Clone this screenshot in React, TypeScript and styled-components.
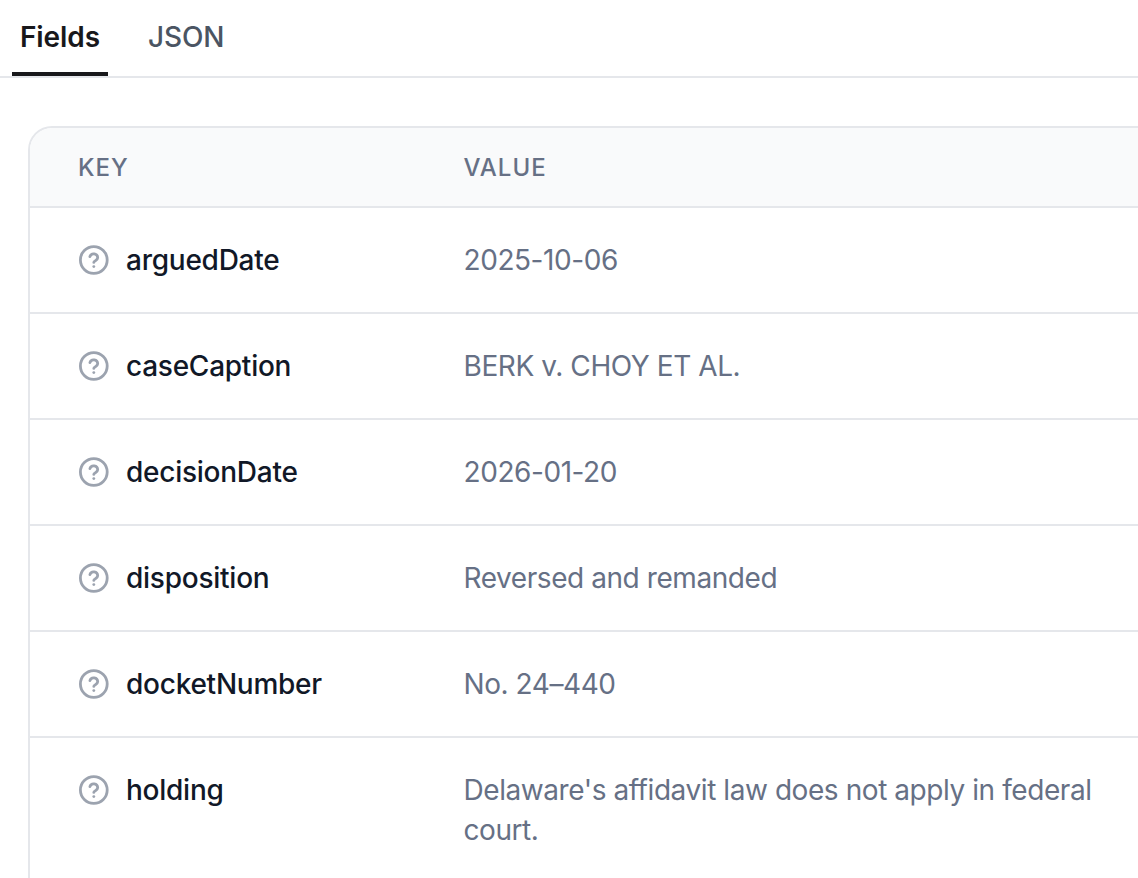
import React from "react";
import styled, { createGlobalStyle } from "styled-components";

const fields = [
  { key: "arguedDate", value: "2025-10-06" },
  { key: "caseCaption", value: "BERK v. CHOY ET AL." },
  { key: "decisionDate", value: "2026-01-20" },
  { key: "disposition", value: "Reversed and remanded" },
  { key: "docketNumber", value: "No. 24–440" },
  { key: "holding", value: "Delaware's affidavit law does not apply in federal court." },
];

const HelpIcon: React.FC = () => (
  <IconSvg viewBox="0 0 32 32" fill="none" stroke="#9ca3af" strokeWidth="2.8" strokeLinecap="round" strokeLinejoin="round">
    <circle cx="15.8" cy="16" r="13.4" />
    <path d="M11.9 12.6a4 4 0 0 1 7.8 1.2c0 2.6-3.9 3.3-3.9 4.6" />
    <path d="M15.8 22.6h.02" />
  </IconSvg>
);

export default function App() {
  return (
    <Page>
      <GlobalStyle />
      <Tabs>
        <Tab $active>Fields</Tab>
        <Tab>JSON</Tab>
      </Tabs>
      <Card>
        <HeaderRow>
          <HeaderCell>Key</HeaderCell>
          <HeaderCell>Value</HeaderCell>
        </HeaderRow>
        {fields.map((f) => (
          <Row key={f.key}>
            <KeyCell>
              <HelpIcon />
              <KeyName>{f.key}</KeyName>
            </KeyCell>
            <ValueCell>{f.value}</ValueCell>
          </Row>
        ))}
      </Card>
    </Page>
  );
}

const GlobalStyle = createGlobalStyle`
  html, body {
    margin: 0;
    height: 100%;
    overflow: hidden;
    background: #fff;
  }
`;

const Page = styled.div`
  width: 1138px;
  height: 878px;
  overflow: hidden;
  font-family: Inter, "Liberation Sans", sans-serif;
  font-size: 28px;
  line-height: 40px;
  -webkit-font-smoothing: antialiased;
`;

const Tabs = styled.div`
  display: flex;
  gap: 32px;
  height: 78px;
  box-sizing: border-box;
  padding-left: 12px;
  border-bottom: 2px solid #e5e7eb;
`;

const Tab = styled.div<{ $active?: boolean }>`
  height: 76px;
  box-sizing: border-box;
  padding: 17px 8px 0;
  letter-spacing: -0.1px;
  font-weight: ${(p) => (p.$active ? 600 : 500)};
  color: ${(p) => (p.$active ? "#18181b" : "#4b5563")};
  border-bottom: 4px solid ${(p) => (p.$active ? "#18181b" : "transparent")};
`;

const Card = styled.div`
  width: 1160px;
  margin: 48px 0 0 28px;
  border: 2px solid #e5e7eb;
  border-bottom: 0;
  border-radius: 24px 0 0 0;
  overflow: hidden;
`;

const HeaderRow = styled.div`
  display: grid;
  grid-template-columns: 385.5px 1fr;
  height: 80px;
  box-sizing: border-box;
  padding-top: 2px;
  align-items: center;
  background: #f9fafb;
  border-bottom: 2px solid #e5e7eb;
`;

const HeaderCell = styled.div`
  padding-left: 48px;
  font-size: 24px;
  font-weight: 500;
  letter-spacing: 1px;
  text-transform: uppercase;
  color: #667085;
`;

const Row = styled.div`
  display: grid;
  grid-template-columns: 385.5px 1fr;
  padding: 32px 0;
  border-bottom: 2px solid #e5e7eb;
`;

const KeyCell = styled.div`
  display: flex;
  align-items: flex-start;
  gap: 16px;
  padding-left: 48px;
`;

const IconSvg = styled.svg`
  width: 32px;
  height: 32px;
  flex: none;
  margin-top: 4px;
`;

const KeyName = styled.span`
  font-weight: 500;
  letter-spacing: -0.25px;
  color: #111827;
`;

const ValueCell = styled.div`
  padding: 0 48px;
  letter-spacing: -0.43px;
  color: #667085;
`;
